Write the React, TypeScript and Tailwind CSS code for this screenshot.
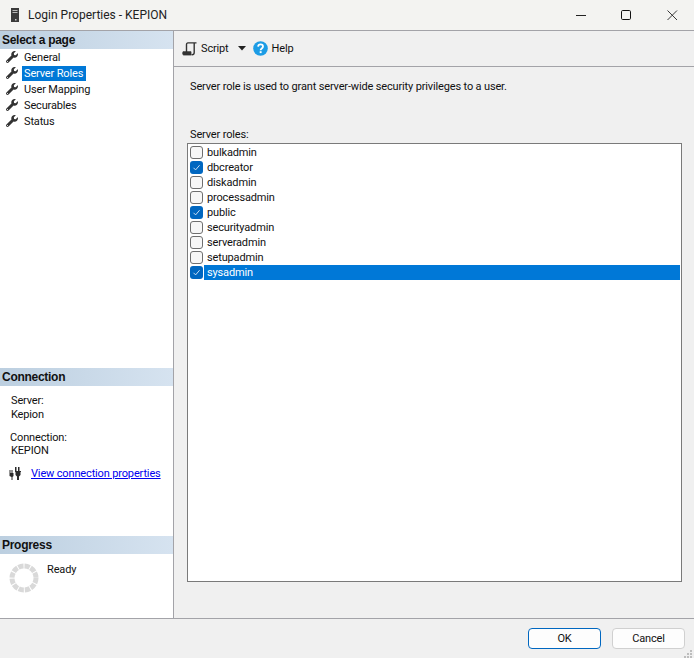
import { FaWrench } from 'react-icons/fa';

const pages = ['General', 'Server Roles', 'User Mapping', 'Securables', 'Status'];

const roles = [
  { name: 'bulkadmin', checked: false },
  { name: 'dbcreator', checked: true },
  { name: 'diskadmin', checked: false },
  { name: 'processadmin', checked: false },
  { name: 'public', checked: true },
  { name: 'securityadmin', checked: false },
  { name: 'serveradmin', checked: false },
  { name: 'setupadmin', checked: false },
  { name: 'sysadmin', checked: true },
];

const SectionHeader = ({ label }: { label: string }) => (
  <div className="h-[18px] pl-[2px] flex items-center bg-gradient-to-r from-[#bccfe0] to-[#d6e3f0] font-bold text-[12px] text-[#111] tracking-[-0.28px] font-['Liberation_Sans',sans-serif]">
    {label}
  </div>
);

const RoleRow = ({ name, checked, selected }: { name: string; checked: boolean; selected: boolean }) => (
  <div className="h-[15px] flex items-center pl-[2px]">
    {checked ? (
      <div className="w-[13px] h-[13px] rounded-[3px] bg-[#0067c0] flex items-center justify-center">
        <svg width="9" height="9" viewBox="0 0 9 9" fill="none">
          <path d="M1.5 4.8 3.6 6.9 7.6 2.2" stroke="#dbe9f6" strokeWidth="0.9" />
        </svg>
      </div>
    ) : (
      <div className="w-[13px] h-[13px] rounded-[3px] bg-[#f7f7f7] border border-[#6f6f6f]" />
    )}
    <div
      className={`ml-[1px] flex-1 h-[15px] pl-[3px] flex items-center ${
        selected ? 'bg-[#0078d7] text-white' : 'text-[#111]'
      }`}
    >
      {name}
    </div>
  </div>
);

export default function App() {
  return (
    <div className="relative w-[694px] h-[658px] flex flex-col overflow-hidden bg-[#f0f0f0] text-[11px] tracking-[-0.15px] leading-[15px] text-[#111] font-['Roboto','Liberation_Sans',sans-serif]">
      {/* TITLE BAR */}
      <div className="h-[31px] shrink-0 flex items-center bg-[#f3f3f1] border-b border-[#a3a3a8]">
        <svg className="ml-[9px]" width="12" height="17" viewBox="0 0 12 17">
          <rect x="2" y="1" width="8" height="14" fill="#3a3a3a" />
          <rect x="3.5" y="3" width="5" height="1" fill="#b8b8b8" />
          <rect x="3.5" y="5" width="5" height="1" fill="#b8b8b8" />
          <rect x="6" y="12" width="1.5" height="1.5" fill="#c8c8c8" />
        </svg>
        <div className="ml-[7px] text-[12px] tracking-normal text-[#222]">Login Properties - KEPION</div>
        <div className="ml-auto flex items-center mr-[16px]">
          <svg width="12" height="12" viewBox="0 0 12 12">
            <path d="M1 6.5h10" stroke="#222" strokeWidth="1" />
          </svg>
          <svg className="ml-[33px]" width="12" height="12" viewBox="0 0 12 12" fill="none">
            <rect x="1.5" y="1.5" width="9" height="9" rx="1.2" stroke="#111" strokeWidth="1" />
          </svg>
          <svg className="ml-[34px]" width="12" height="12" viewBox="0 0 12 12" fill="none">
            <path d="M1.5 1.5l9.5 9.5M11 1.5 1.5 11" stroke="#222" strokeWidth="0.9" />
          </svg>
        </div>
      </div>

      {/* BODY */}
      <div className="flex-1 flex min-h-0">
        {/* SIDEBAR */}
        <div className="w-[174px] shrink-0 flex flex-col bg-white border-r border-[#a3a3a8]">
          <div className="flex-1">
            <SectionHeader label="Select a page" />
            <div>
              {pages.map((page) => (
                <div key={page} className="h-[16px] flex items-center pl-[6px]">
                  <FaWrench className="text-[#333]" size={12} />
                  <span
                    className={`ml-[4px] h-[15px] pl-[2px] pr-[3px] flex items-center ${
                      page === 'Server Roles' ? 'bg-[#0078d7] text-white' : ''
                    }`}
                  >
                    {page}
                  </span>
                </div>
              ))}
            </div>
          </div>

          <div className="h-[168px]">
            <SectionHeader label="Connection" />
            <div className="pl-[11px] pt-[7px]">
              <div className="h-[14px]">Server:</div>
              <div className="h-[15px]">Kepion</div>
              <div className="h-[13px] mt-[8px] -ml-[1px]">Connection:</div>
              <div className="h-[15px]">KEPION</div>
            </div>
            <div className="flex items-center mt-[8px] pl-[9px]">
              <svg width="15" height="15" viewBox="0 0 15 15" fill="#2b2b2b">
                <path d="M0.5 4h1v3h1V4h1v3h1v3L3.5 11v3h-1v-3L0.5 10z" />
                <path d="M6 1h1.5v4h1.5V1H10.5v4H12v1h-.5v3L10 10.5V14H8v-3.5L6.5 9V6H6z" />
              </svg>
              <span className="ml-[7px] text-[#0000ee] underline whitespace-nowrap">View connection properties</span>
            </div>
          </div>

          <div className="h-[82px]">
            <SectionHeader label="Progress" />
            <div className="flex pl-[9px] pt-[8px]">
              <svg className="mt-[1px]" width="30" height="30" viewBox="0 0 30 30" fill="none">
                <circle cx="15" cy="15" r="12" stroke="#d9d9d9" strokeWidth="5" strokeDasharray="5.3 1" />
              </svg>
              <span className="ml-[8px]">Ready</span>
            </div>
          </div>
        </div>

        {/* MAIN */}
        <div className="flex-1 flex flex-col min-w-0">
          <div className="h-[36px] shrink-0 flex items-center pl-[8px] border-b border-[#a3a3a8]">
            <svg width="15" height="14" viewBox="0 0 15 14" fill="none" stroke="#333" strokeWidth="1.4">
              <path d="M4.5 10V2.7C4.5 1.5 5 .9 6 .9H14.5" />
              <path d="M12.2 1V10.5C12.2 12 11.5 12.8 10 12.8H9.5" />
              <path d="M1 9.7H9V13H2C1 13 .7 12.4 .7 11.5z" fill="#333" strokeWidth="0.8" />
            </svg>
            <span className="ml-[4px]">Script</span>
            <svg className="ml-[9px]" width="8" height="5" viewBox="0 0 8 5">
              <path d="M0 0h8L4 4.5z" fill="#222" />
            </svg>
            <svg className="ml-[7px]" width="15" height="15" viewBox="0 0 15 15">
              <circle cx="7.5" cy="7.5" r="7.3" fill="#1c9ce5" />
              <path d="M5.1 5.6C5.3 2.6 10 2.7 10 5.5 10 7.5 7.6 7.4 7.6 9.2" fill="none" stroke="#fff" strokeWidth="1.8" />
              <rect x="6.7" y="10.2" width="1.9" height="1.9" fill="#fff" />
            </svg>
            <span className="ml-[4px]">Help</span>
          </div>

          <div className="flex-1 pl-[16px] pr-[12px] pt-[12px] flex flex-col min-h-0">
            <div className="h-[15px]">Server role is used to grant server-wide security privileges to a user.</div>
            <div className="h-[15px] mt-[33px]">Server roles:</div>
            <div className="mt-[1px] -ml-[3px] h-[439px] bg-white border border-[#7a7a7a] pt-[1px] pr-[1px]">
              {roles.map((role) => (
                <RoleRow
                  key={role.name}
                  name={role.name}
                  checked={role.checked}
                  selected={role.name === 'sysadmin'}
                />
              ))}
            </div>
          </div>
        </div>
      </div>

      {/* FOOTER */}
      <div className="h-[40px] shrink-0 flex items-start justify-end gap-[11px] pt-[9px] pr-[9px] border-t border-[#a3a3a8]">
        <button className="w-[73px] h-[21px] rounded-[4px] bg-[#fdfdfd] border border-[#0067c0] flex items-center justify-center">
          OK
        </button>
        <button className="w-[73px] h-[21px] rounded-[4px] bg-[#fdfdfd] border border-[#d0d0d0] flex items-center justify-center">
          Cancel
        </button>
      </div>

      {/* RESIZE GRIP */}
      <svg className="absolute right-0 bottom-0" width="10" height="10" viewBox="0 0 10 10" fill="#bdbdbd">
        <rect x="6" y="2" width="2" height="2" />
        <rect x="3" y="5" width="2" height="2" />
        <rect x="6" y="5" width="2" height="2" />
        <rect x="0" y="8" width="2" height="2" />
        <rect x="3" y="8" width="2" height="2" />
        <rect x="6" y="8" width="2" height="2" />
      </svg>
    </div>
  );
}
